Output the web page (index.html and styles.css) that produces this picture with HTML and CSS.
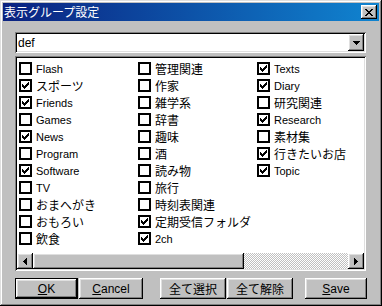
FILE: index.html
```html
<!DOCTYPE html>
<html lang="ja">
<head>
    <meta charset="UTF-8">
    <title>表示グループ設定</title>
    <link rel="stylesheet" href="styles.css">
</head>
<body>
<div class="window">
    <div class="titlebar">
        <span class="title">表示グループ設定</span>
        <span class="close">
            <svg width="8" height="7" viewBox="0 0 8 7" shape-rendering="crispEdges"><path d="M0 0h2v1h-2zM6 0h2v1h-2zM1 1h2v1h-2zM5 1h2v1h-2zM2 2h4v1h-4zM3 3h2v1h-2zM2 4h4v1h-4zM1 5h2v1h-2zM5 5h2v1h-2zM0 6h2v1h-2zM6 6h2v1h-2z" fill="#000"/></svg>
        </span>
    </div>

    <div class="content">
        <div class="combo">
            <span class="combo-value">def</span>
            <span class="raised combo-btn">
                <svg width="7" height="4" viewBox="0 0 7 4" shape-rendering="crispEdges"><path d="M0 0h7v1h-7zM1 1h5v1h-5zM2 2h3v1h-3zM3 3h1v1h-1z" fill="#000"/></svg>
            </span>
        </div>

        <div class="listbox">
            <div class="columns">
                <div class="col">
                    <div class="item"><span class="box"></span>Flash</div>
                    <div class="item ja"><span class="box"><svg class="tick" width="7" height="7" viewBox="0 0 7 7" shape-rendering="crispEdges"><path d="M6 0h1v1h-1zM5 1h2v1h-2zM0 2h1v1h-1zM4 2h3v1h-3zM0 3h2v1h-2zM3 3h3v1h-3zM0 4h5v1h-5zM1 5h3v1h-3zM2 6h1v1h-1z"/></svg></span>スポーツ</div>
                    <div class="item"><span class="box"><svg class="tick" width="7" height="7" viewBox="0 0 7 7" shape-rendering="crispEdges"><path d="M6 0h1v1h-1zM5 1h2v1h-2zM0 2h1v1h-1zM4 2h3v1h-3zM0 3h2v1h-2zM3 3h3v1h-3zM0 4h5v1h-5zM1 5h3v1h-3zM2 6h1v1h-1z"/></svg></span>Friends</div>
                    <div class="item"><span class="box"></span>Games</div>
                    <div class="item"><span class="box"><svg class="tick" width="7" height="7" viewBox="0 0 7 7" shape-rendering="crispEdges"><path d="M6 0h1v1h-1zM5 1h2v1h-2zM0 2h1v1h-1zM4 2h3v1h-3zM0 3h2v1h-2zM3 3h3v1h-3zM0 4h5v1h-5zM1 5h3v1h-3zM2 6h1v1h-1z"/></svg></span>News</div>
                    <div class="item"><span class="box"></span>Program</div>
                    <div class="item"><span class="box"><svg class="tick" width="7" height="7" viewBox="0 0 7 7" shape-rendering="crispEdges"><path d="M6 0h1v1h-1zM5 1h2v1h-2zM0 2h1v1h-1zM4 2h3v1h-3zM0 3h2v1h-2zM3 3h3v1h-3zM0 4h5v1h-5zM1 5h3v1h-3zM2 6h1v1h-1z"/></svg></span>Software</div>
                    <div class="item"><span class="box"></span>TV</div>
                    <div class="item ja"><span class="box"></span>おまへがき</div>
                    <div class="item ja"><span class="box"></span>おもろい</div>
                    <div class="item ja"><span class="box"></span>飲食</div>
                </div>
                <div class="col">
                    <div class="item ja"><span class="box"></span>管理関連</div>
                    <div class="item ja"><span class="box"></span>作家</div>
                    <div class="item ja"><span class="box"></span>雑学系</div>
                    <div class="item ja"><span class="box"></span>辞書</div>
                    <div class="item ja"><span class="box"></span>趣味</div>
                    <div class="item ja"><span class="box"></span>酒</div>
                    <div class="item ja"><span class="box"></span>読み物</div>
                    <div class="item ja"><span class="box"></span>旅行</div>
                    <div class="item ja"><span class="box"></span>時刻表関連</div>
                    <div class="item ja"><span class="box"><svg class="tick" width="7" height="7" viewBox="0 0 7 7" shape-rendering="crispEdges"><path d="M6 0h1v1h-1zM5 1h2v1h-2zM0 2h1v1h-1zM4 2h3v1h-3zM0 3h2v1h-2zM3 3h3v1h-3zM0 4h5v1h-5zM1 5h3v1h-3zM2 6h1v1h-1z"/></svg></span>定期受信フォルダ</div>
                    <div class="item"><span class="box"><svg class="tick" width="7" height="7" viewBox="0 0 7 7" shape-rendering="crispEdges"><path d="M6 0h1v1h-1zM5 1h2v1h-2zM0 2h1v1h-1zM4 2h3v1h-3zM0 3h2v1h-2zM3 3h3v1h-3zM0 4h5v1h-5zM1 5h3v1h-3zM2 6h1v1h-1z"/></svg></span>2ch</div>
                </div>
                <div class="col">
                    <div class="item"><span class="box"><svg class="tick" width="7" height="7" viewBox="0 0 7 7" shape-rendering="crispEdges"><path d="M6 0h1v1h-1zM5 1h2v1h-2zM0 2h1v1h-1zM4 2h3v1h-3zM0 3h2v1h-2zM3 3h3v1h-3zM0 4h5v1h-5zM1 5h3v1h-3zM2 6h1v1h-1z"/></svg></span>Texts</div>
                    <div class="item"><span class="box"><svg class="tick" width="7" height="7" viewBox="0 0 7 7" shape-rendering="crispEdges"><path d="M6 0h1v1h-1zM5 1h2v1h-2zM0 2h1v1h-1zM4 2h3v1h-3zM0 3h2v1h-2zM3 3h3v1h-3zM0 4h5v1h-5zM1 5h3v1h-3zM2 6h1v1h-1z"/></svg></span>Diary</div>
                    <div class="item ja"><span class="box"></span>研究関連</div>
                    <div class="item"><span class="box"><svg class="tick" width="7" height="7" viewBox="0 0 7 7" shape-rendering="crispEdges"><path d="M6 0h1v1h-1zM5 1h2v1h-2zM0 2h1v1h-1zM4 2h3v1h-3zM0 3h2v1h-2zM3 3h3v1h-3zM0 4h5v1h-5zM1 5h3v1h-3zM2 6h1v1h-1z"/></svg></span>Research</div>
                    <div class="item ja"><span class="box"></span>素材集</div>
                    <div class="item ja"><span class="box"><svg class="tick" width="7" height="7" viewBox="0 0 7 7" shape-rendering="crispEdges"><path d="M6 0h1v1h-1zM5 1h2v1h-2zM0 2h1v1h-1zM4 2h3v1h-3zM0 3h2v1h-2zM3 3h3v1h-3zM0 4h5v1h-5zM1 5h3v1h-3zM2 6h1v1h-1z"/></svg></span>行きたいお店</div>
                    <div class="item"><span class="box"><svg class="tick" width="7" height="7" viewBox="0 0 7 7" shape-rendering="crispEdges"><path d="M6 0h1v1h-1zM5 1h2v1h-2zM0 2h1v1h-1zM4 2h3v1h-3zM0 3h2v1h-2zM3 3h3v1h-3zM0 4h5v1h-5zM1 5h3v1h-3zM2 6h1v1h-1z"/></svg></span>Topic</div>
                </div>
            </div>

            <div class="hscroll">
                <span class="raised sbtn">
                    <svg width="4" height="7" viewBox="0 0 4 7" shape-rendering="crispEdges"><path d="M3 0h1v7h-1zM2 1h1v5h-1zM1 2h1v3h-1zM0 3h1v1h-1z" fill="#000"/></svg>
                </span>
                <span class="raised thumb"></span>
                <span class="track"></span>
                <span class="raised sbtn">
                    <svg width="4" height="7" viewBox="0 0 4 7" shape-rendering="crispEdges"><path d="M0 0h1v7h-1zM1 1h1v5h-1zM2 2h1v3h-1zM3 3h1v1h-1z" fill="#000"/></svg>
                </span>
            </div>
        </div>

        <div class="buttons">
            <span class="btn default w-ok"><span class="raised inner"><u>O</u>K</span></span>
            <span class="btn w-cancel"><span class="raised inner"><u>C</u>ancel</span></span>
            <span class="btn w-all gap-l"><span class="raised inner">全て選択</span></span>
            <span class="btn w-none"><span class="raised inner">全て解除</span></span>
            <span class="btn w-save gap-r"><span class="raised inner"><u>S</u>ave</span></span>
        </div>
    </div>
</div>
</body>
</html>
```

FILE: styles.css
```css
body {
    margin: 0;
    font-family: "Liberation Sans", "Noto Sans CJK JP", sans-serif;
    font-size: 11px;
    color: #000;
}

.window {
    width: 382px;
    height: 306px;
    box-sizing: border-box;
    padding: 3px;
    background: #c0c0c0;
    box-shadow: inset -1px -1px #000, inset 1px 1px #dfdfdf, inset -2px -2px #808080, inset 2px 2px #fff;
}

.titlebar {
    height: 18px;
    display: flex;
    align-items: center;
    justify-content: space-between;
    padding: 0 2px 0 1px;
    background: linear-gradient(to right, #0a2180, #1084d0);
}

.title {
    color: #fff;
    font-family: "Noto Sans CJK JP", sans-serif;
    font-size: 12px;
    line-height: 18px;
}

.raised {
    background: #c0c0c0;
    box-shadow: inset -1px -1px #000, inset 1px 1px #fff, inset -2px -2px #808080, inset 2px 2px #dfdfdf;
    box-sizing: border-box;
    display: flex;
    align-items: center;
    justify-content: center;
}

.close {
    width: 16px;
    height: 14px;
    display: flex;
    align-items: center;
    justify-content: center;
    background: #c0c0c0;
    box-shadow: inset -1px -1px #000, inset 1px 1px #fff, inset -2px -2px #808080, inset 2px 2px #dfdfdf;
}

.content {
    padding: 11px 0 0 12px;
}

.combo {
    width: 351px;
    height: 21px;
    box-sizing: border-box;
    padding: 2px;
    background: #fff;
    display: flex;
    align-items: center;
    box-shadow: inset 1px 1px #808080, inset -1px -1px #fff, inset 2px 2px #000, inset -2px -2px #dfdfdf;
}

.combo-value {
    flex: 1;
    padding-left: 1px;
    font-size: 12px;
}

.combo-btn {
    width: 16px;
    height: 17px;
}

.listbox {
    width: 351px;
    height: 215px;
    margin-top: 3px;
    box-sizing: border-box;
    padding: 2px;
    background: #fff;
    display: flex;
    flex-direction: column;
    box-shadow: inset 1px 1px #808080, inset -1px -1px #fff, inset 2px 2px #000, inset -2px -2px #dfdfdf;
}

.columns {
    flex: 1;
    display: flex;
    overflow: hidden;
    padding: 2px 0 0 2px;
}

.col {
    width: 119px;
    flex-shrink: 0;
    display: flex;
    flex-direction: column;
}

.item {
    height: 17px;
    display: flex;
    align-items: center;
    gap: 4px;
    white-space: nowrap;
}

.ja {
    font-size: 12px;
}

.box {
    width: 13px;
    height: 13px;
    box-sizing: border-box;
    border: 2px solid #000;
    background: #fff;
    display: flex;
    align-items: center;
    justify-content: center;
}

.tick {
    fill: #000;
}

.hscroll {
    height: 16px;
    display: flex;
}

.sbtn {
    width: 16px;
    height: 16px;
}

.thumb {
    width: 211px;
    height: 16px;
}

.track {
    flex: 1;
    background-color: #c0c0c0;
    background-image: repeating-conic-gradient(#fff 0 25%, #c0c0c0 0 50%);
    background-size: 2px 2px;
}

.buttons {
    display: flex;
    margin-top: 7px;
    height: 21px;
}

.btn {
    height: 21px;
    display: flex;
    margin-right: 1px;
}

.btn .inner {
    flex: 1;
    font-size: 12px;
}

.btn.default {
    border: 1px solid #000;
    box-sizing: border-box;
}

.w-ok { width: 63px; }
.w-cancel { width: 64px; }
.w-all { width: 66px; }
.w-none { width: 66px; }
.w-save { width: 62px; }

.gap-l { margin-left: 16px; }
.gap-r { margin-left: 11px; }
```
